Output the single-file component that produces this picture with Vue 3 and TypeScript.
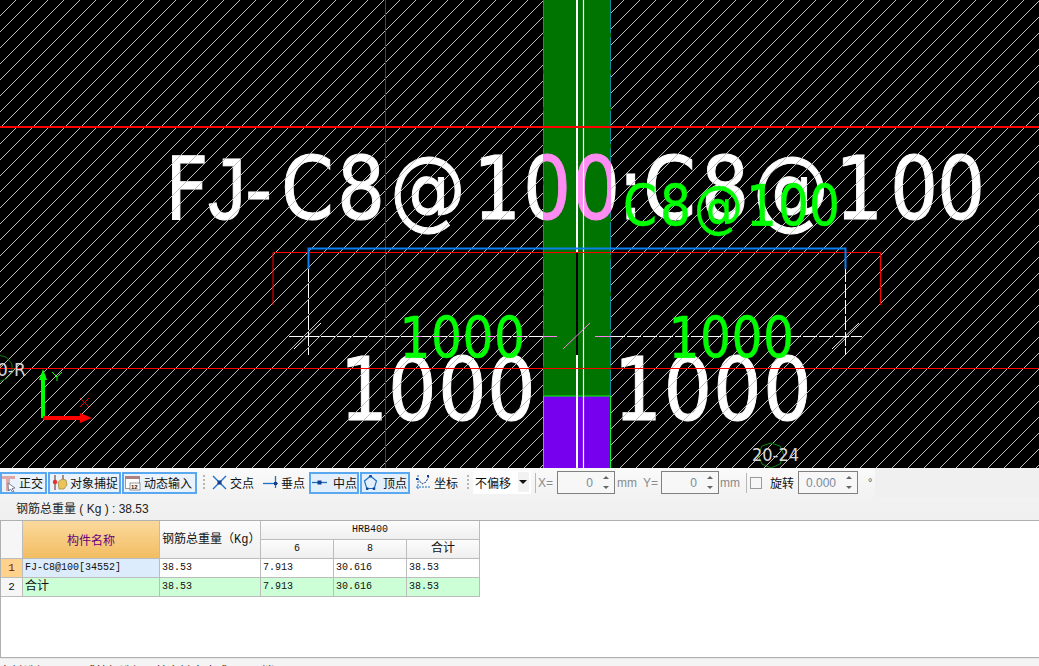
<script setup lang="ts">
interface Row { no: string; name: string; total: string; a: string; b: string; sum: string; cls: string; cjk: boolean }
const rows: Row[] = [
  { no: '1', name: 'FJ-C8@100[34552]', total: '38.53', a: '7.913', b: '30.616', sum: '38.53', cls: 'first', cjk: false },
  { no: '2', name: '合计', total: '38.53', a: '7.913', b: '30.616', sum: '38.53', cls: 'totalrow', cjk: true },
]
// The drawing's font is narrower than DejaVu Sans, so glyphs are squeezed and placed one by one.
const SX = 0.87
const xs = (list: number[]): string => list.map((v) => (v / SX).toFixed(1)).join(' ')
const squeeze = `scale(${SX} 1)`
const titleX = xs([165, 208, 245, 281, 337, 390, 473, 523, 572, 618, 643, 701, 753, 835, 890, 937])
const bigL = xs([339.5, 388, 438, 487])
const bigR = xs([613.5, 663.5, 713, 763])
const midL = xs([399.5, 431, 462.5, 494])
const midR = xs([668.5, 700, 731.5, 763])
const midT = xs([623, 660, 694, 746, 778, 809])
</script>

<template>
  <div class="root">
    <svg class="cad" width="1039" height="468" viewBox="0 0 1039 468">
      <defs>
        <pattern id="hatch" width="16" height="16" patternUnits="userSpaceOnUse">
          <line x1="-1" y1="17" x2="17" y2="-1" class="hl" />
        </pattern>
        <clipPath id="col"><rect x="543" y="0" width="68" height="468" /></clipPath>
      </defs>
      <rect width="1039" height="468" fill="#000" />

      <g class="big" :transform="squeeze">
        <text :x="titleX" y="219" font-size="87">F<tspan class="jay">J</tspan>-C8@100:C8@100</text>
        <text :x="bigL" y="420" font-size="88">1000</text>
        <text :x="bigR" y="420" font-size="88">1000</text>
      </g>

      <rect width="1039" height="468" fill="url(#hatch)" />

      <rect x="543" y="0" width="68" height="396" fill="#007400" />
      <rect x="543" y="396" width="68" height="72" fill="#7700ee" />
      <line x1="543" y1="396" x2="611" y2="396" stroke="#00ff00" stroke-width="1" />
      <line x1="543.5" y1="396" x2="543.5" y2="468" stroke="#00ff00" />
      <line x1="610.5" y1="396" x2="610.5" y2="468" stroke="#00ff00" />
      <line x1="543.5" y1="0" x2="543.5" y2="396" class="teal" />
      <line x1="610.5" y1="0" x2="610.5" y2="396" class="teal" />

      <g clip-path="url(#col)">
        <g class="big pink" :transform="squeeze">
          <text :x="titleX" y="219" font-size="87">F<tspan class="jay">J</tspan>-C8@100:C8@100</text>
        </g>
      </g>

      <line x1="577" y1="0" x2="577" y2="253" class="w2" />
      <line x1="577" y1="253" x2="577" y2="355" stroke="#000" stroke-width="2" />
      <line x1="577" y1="355" x2="577" y2="468" class="w2" />
      <line x1="583.5" y1="0" x2="583.5" y2="468" stroke="#fff" stroke-width="1.2" />

      <line x1="385.5" y1="0" x2="385.5" y2="468" stroke="#8f2a10" />

      <rect x="0" y="126" width="1039" height="2" fill="#ff0000" />
      <rect x="0" y="368" width="1039" height="1" fill="#ff0000" />
      <polyline points="273,305 273,252.5 880.5,252.5 880.5,305" class="red" fill="none" />

      <line x1="308.5" y1="268" x2="308.5" y2="355" class="wd" />
      <line x1="845.5" y1="268" x2="845.5" y2="355" class="wd" />
      <polyline points="308.5,269 308.5,248.5 845.5,248.5 845.5,269" fill="none" stroke="#0a7ff0" stroke-width="2" />

      <line x1="289" y1="336.5" x2="543" y2="336.5" class="wh" />
      <line x1="611" y1="336.5" x2="862" y2="336.5" class="wh" />
      <line x1="543" y1="336.5" x2="557" y2="336.5" class="pk" />
      <line x1="595" y1="336.5" x2="611" y2="336.5" class="pk" />
      <line x1="294" y1="349" x2="321" y2="323" stroke="#fff" />
      <line x1="832" y1="349" x2="859" y2="323" stroke="#fff" />
      <line x1="563" y1="349" x2="590" y2="323" class="pk" />

      <g class="grn" :transform="squeeze">
        <text :x="midL" y="358" font-size="56">1000</text>
        <text :x="midR" y="358" font-size="56">1000</text>
        <text :x="midT" y="226" font-size="56">C8@100</text>
      </g>
      <g class="pk">
        <line x1="416" y1="336.5" x2="422" y2="336.5" />
        <line x1="434" y1="336.5" x2="441" y2="336.5" />
        <line x1="455" y1="336.5" x2="462" y2="336.5" />
        <line x1="488" y1="336.5" x2="496" y2="336.5" />
        <line x1="518" y1="336.5" x2="524" y2="336.5" />
      </g>

      <!-- UCS axis -->
      <line x1="43" y1="418" x2="43" y2="378" stroke="#00ff00" stroke-width="4" />
      <polygon points="43,369 47,380 39,380" fill="#00ff00" />
      <line x1="43" y1="418" x2="82" y2="418" stroke="#ff0000" stroke-width="4" />
      <polygon points="92,418 80,413 80,423" fill="#ff0000" />
      <polyline points="52,372 57,377 62,372" fill="none" stroke="#00ff00" />
      <line x1="57" y1="377" x2="57" y2="381" stroke="#00ff00" />
      <line x1="80" y1="398" x2="89" y2="407" stroke="#e00000" />
      <line x1="89" y1="398" x2="80" y2="407" stroke="#e00000" />

      <!-- grid bubbles -->
      <polygon points="-2,355 6,357 12,364 12,373 6,379 -2,382" fill="none" stroke="#0a7a0a" />
      <text x="-3" y="376" class="lab" font-size="17">0-R</text>
      <polygon points="771,443 780,446 784,455 780,464 771,468 762,464 758,455 762,446" fill="none" stroke="#0a8a0a" />
      <text x="752" y="461" class="lab" font-size="17" textLength="47" lengthAdjust="spacingAndGlyphs">20-24</text>
    </svg>

    <div class="toolbar">
      <div class="bar">
        <button class="tb act w47 gap0">
          <svg width="17" height="18" viewBox="0 0 17 18"><path d="M0 2h13v3H8v12H4V5H0z" fill="#e0a8a4" /><path d="M6 9l7 5-3 .5 2 3-1.500 .5-2-3-2 2z" fill="#fff" stroke="#667" stroke-width=".8" /></svg>
          <span>正交</span>
        </button>
        <button class="tb act w74">
          <svg width="18" height="17" viewBox="0 0 18 17"><path d="M5 1v15M13 1v8" stroke="#7a4a3a" stroke-width="1.200" /><circle cx="5" cy="8" r="2.200" fill="#d33" /><path d="M8 8l4-3 4 1 1 5-3 4H9z" fill="#e8c45a" stroke="#a08030" stroke-width=".7" /></svg>
          <span>对象捕捉</span>
        </button>
        <button class="tb act w75 gap3">
          <svg width="17" height="17" viewBox="0 0 17 17"><rect x="1.500" y="2.500" width="14" height="12" fill="#fff" stroke="#999" /><rect x="1" y="2" width="15" height="3" fill="#b08080" /><rect x="6" y="9" width="10" height="7" fill="#fff" stroke="#555" stroke-width=".6" /><text x="7" y="15" class="mini">12</text></svg>
          <span>动态输入</span>
        </button>

        <i class="grip g1"></i>

        <button class="tb w46 ml4">
          <svg width="17" height="17" viewBox="0 0 17 17"><path d="M2 2l13 13M15 2L2 15" stroke="#1f6fc4" stroke-width="1.400" /><rect x="6.500" y="6.500" width="4" height="4" fill="#123f8f" /></svg>
          <span>交点</span>
        </button>
        <button class="tb w47 ml5">
          <svg width="17" height="17" viewBox="0 0 17 17"><path d="M1 9.500h15" stroke="#1f6fc4" stroke-width="1.300" /><path d="M13.500 2v12" stroke="#1f6fc4" stroke-width="1.300" /><rect x="12" y="8" width="3" height="3" fill="#123f8f" /></svg>
          <span>垂点</span>
        </button>
        <button class="tb act sel w50 ml2 gap5">
          <svg width="17" height="17" viewBox="0 0 17 17"><path d="M1 8.500h15" stroke="#1f6fc4" stroke-width="1.300" /><rect x="6.500" y="6.500" width="4" height="4" fill="#123f8f" /></svg>
          <span>中点</span>
        </button>
        <button class="tb act sel w50 ml1 gap4">
          <svg width="17" height="17" viewBox="0 0 17 17"><path d="M8.500 2l6 5-2.300 7.500H4.800L2.500 7z" fill="none" stroke="#1f6fc4" stroke-width="1.200" /><rect x="7.300" y="1" width="2.400" height="2.400" fill="#123f8f" /><rect x="4" y="13.500" width="2.400" height="2.400" fill="#123f8f" /><rect x="10.800" y="13.500" width="2.400" height="2.400" fill="#123f8f" /></svg>
          <span>顶点</span>
        </button>
        <button class="tb w46 ml3">
          <svg width="17" height="17" viewBox="0 0 17 17"><path d="M3 1v15M1 13h15" stroke="#1f6fc4" stroke-dasharray="2 1" /><path d="M3 5l4 5 4-2 3-6" fill="none" stroke="#123f8f" stroke-dasharray="2 1" /><rect x="12" y="1" width="2" height="2" fill="#123f8f" /><rect x="1" y="4" width="2" height="2" fill="#123f8f" /></svg>
          <span>坐标</span>
        </button>

        <i class="grip g2"></i>

        <div class="combo">
          <span class="combo-t">不偏移</span>
          <span class="combo-a"></span>
        </div>
        <i class="sep s1"></i>
        <span class="lbl x">X=</span>
        <div class="spin w58"><span class="val">0</span><span class="arr"><b class="up"></b><b class="dn"></b></span></div>
        <span class="lbl mm">mm</span>
        <span class="lbl y">Y=</span>
        <div class="spin w58"><span class="val">0</span><span class="arr"><b class="up"></b><b class="dn"></b></span></div>
        <span class="lbl mm2">mm</span>
        <i class="sep s2"></i>
        <i class="check"></i>
        <span class="rot">旋转</span>
        <div class="spin w60"><span class="val">0.000</span><span class="arr"><b class="up"></b><b class="dn"></b></span></div>
        <span class="lbl deg">°</span>
      </div>
    </div>

    <div class="summary">钢筋总重量 ( Kg ) : 38.53</div>

    <div class="panel">
      <table class="grid">
        <colgroup>
          <col class="c0" /><col class="c1" /><col class="c2" /><col class="c3" /><col class="c3" /><col class="c3" />
        </colgroup>
        <thead>
          <tr>
            <th rowspan="2" class="corner"></th>
            <th rowspan="2" class="name-h">构件名称</th>
            <th rowspan="2" class="left">钢筋总重量（Kg）</th>
            <th colspan="3">HRB400</th>
          </tr>
          <tr><th>6</th><th>8</th><th class="cjk">合计</th></tr>
        </thead>
        <tbody>
          <tr v-for="r in rows" :key="r.no" :class="r.cls">
            <td class="no">{{ r.no }}</td>
            <td class="nm" :class="{ cjk: r.cjk }">{{ r.name }}</td>
            <td>{{ r.total }}</td>
            <td>{{ r.a }}</td>
            <td>{{ r.b }}</td>
            <td>{{ r.sum }}</td>
          </tr>
        </tbody>
      </table>
    </div>

    <div class="status">左键选择图元，或拉框选择，按右键中止或ESC取消</div>
  </div>
</template>

<style>
html, body { margin: 0; padding: 0; background: #f0f0f0; }
</style>

<style scoped>
.root { width: 1039px; height: 666px; overflow: hidden; display: flex; flex-direction: column; background: #f0f0f0; font-family: "Liberation Sans", "Noto Sans CJK SC", sans-serif; }
.cad { display: block; flex: none; }
.hl { stroke: #c0c0c0; stroke-width: 1; shape-rendering: crispEdges; }
.big text { font-family: "DejaVu Sans", sans-serif; fill: #fff; stroke: #fff; stroke-width: 1; }
.pink text { fill: #ff8cf2; stroke: #ff8cf2; }
.jay { font-family: "Liberation Sans", sans-serif; }
.grn text { font-family: "DejaVu Sans", sans-serif; fill: #00ff00; stroke: #00ff00; stroke-width: .4; }
.lab { font-family: "DejaVu Sans", sans-serif; fill: #d8d8d8; }
.mini { font-family: "Liberation Sans", sans-serif; font-size: 6px; fill: #222; font-weight: bold; }
.teal { stroke: #0a8f9a; stroke-width: 1; stroke-dasharray: 33 4; }
.red { stroke: #ff0000; stroke-width: 1; }
.w2 { stroke: #fff; stroke-width: 2; }
.wd { stroke: #fff; stroke-width: 1; stroke-dasharray: 14 2; }
.wh { stroke: #fff; stroke-width: 1; stroke-dasharray: 14 2; }
.pk { stroke: #ff80f0; stroke-width: 1; }

.toolbar { height: 29px; flex: none; background: #f0f0f0; }
.bar { width: 875px; height: 29px; display: flex; align-items: center; background: linear-gradient(#fafafa, #f2f2f2); box-sizing: border-box; }
.tb { height: 22px; box-sizing: border-box; border: 1px solid transparent; background: none; padding: 0 0 0 1px; margin: 0; display: flex; align-items: center; gap: 2px; font: 12px "Noto Sans CJK SC", sans-serif; color: #111; flex: none; }
.tb svg { flex: none; }
.tb span { line-height: 1; white-space: nowrap; }
.act { border: 2px solid #5aa9f0; padding-left: 0; background: #eaf3fb; }
.sel { background: #e3effa; }
.w47 { width: 47px; margin-right: 1px; }
.w74 { width: 73px; margin-right: 1px; }
.w75 { width: 75px; }
.w46 { width: 46px; }
.w50 { width: 50px; }
.gap0 { gap: 0; }
.gap3 { gap: 3px; }
.gap4 { gap: 4px; }
.gap5 { gap: 5px; }
.ml4 { margin-left: 4px; }
.ml5 { margin-left: 5px; }
.ml2 { margin-left: 1px; }
.ml1 { margin-left: 1px; }
.ml3 { margin-left: 3px; }
.grip { flex: none; width: 2px; height: 16px; background: repeating-linear-gradient(#b5b5b5 0 2px, transparent 2px 4px); }
.g1 { margin-left: 6px; }
.g2 { margin-left: 8px; }
.combo { flex: none; width: 58px; height: 23px; margin-left: 4px; background: #fff; display: flex; align-items: center; box-sizing: border-box; padding-left: 2px; position: relative; }
.combo-t { font: 12px "Noto Sans CJK SC", sans-serif; color: #111; }
.combo-a { position: absolute; right: 2px; top: 1px; width: 11px; height: 20px; background: #f2f2f2; }
.combo-a::after { content: ""; position: absolute; left: 1px; top: 8px; border: 4px solid transparent; border-top-color: #111; border-bottom: 0; }
.sep { flex: none; width: 1px; height: 20px; background: #b8b8b8; }
.s1 { margin-left: 4px; }
.s2 { margin-left: 4px; }
.lbl { flex: none; font-size: 12px; color: #8a8a8a; line-height: 1; }
.x { margin-left: 2px; width: 19px; }
.mm { margin-left: 2px; width: 26px; font-size: 12px; }
.y { width: 18px; }
.mm2 { margin-left: 1px; width: 22px; }
.spin { flex: none; height: 23px; box-sizing: border-box; border: 1px solid #808080; background: #f7f7f7; display: flex; align-items: center; justify-content: flex-end; }
.w58 { width: 58px; }
.w60 { width: 60px; }
.val { font-size: 12px; color: #7a8a9a; margin-right: 8px; }
.arr { width: 10px; margin-right: 3px; height: 100%; display: flex; flex-direction: column; align-items: center; justify-content: space-between; padding: 4px 0; box-sizing: border-box; }
.up, .dn { width: 0; height: 0; border-left: 3px solid transparent; border-right: 3px solid transparent; }
.up { border-bottom: 3px solid #666; }
.dn { border-top: 3px solid #666; }
.check { flex: none; width: 10px; height: 10px; border: 1px solid #9a9a9a; background: #f7f7f7; margin-left: 3px; }
.rot { flex: none; margin-left: 8px; margin-right: 4px; width: 24px; font: 12px "Noto Sans CJK SC", sans-serif; color: #111; }
.deg { margin-left: 10px; font-size: 11px; color: #555; }

.summary { height: 23px; flex: none; box-sizing: border-box; padding: 3px 0 0 16px; font-size: 12px; line-height: 18px; color: #222; background: linear-gradient(#f2f2f2, #efefef); white-space: nowrap; }

.panel { height: 138px; flex: none; box-sizing: border-box; border-top: 1px solid #b0b0b0; border-left: 1px solid #b0b0b0; border-bottom: 1px solid #b0b0b0; background: #fff; }
.grid { border-collapse: separate; border-spacing: 0; table-layout: fixed; width: 478px; font: 10px/18px "Liberation Mono", "Noto Sans CJK SC", monospace; color: #111; }
.c0 { width: 22px; }
.c1 { width: 137px; }
.c2 { width: 101px; }
.c3 { width: 73px; }
.grid th, .grid td { height: 19px; padding: 0; box-sizing: border-box; border-right: 1px solid #bcbcbc; border-bottom: 1px solid #bcbcbc; white-space: nowrap; overflow: hidden; }
.grid th { font-weight: normal; text-align: center; background: linear-gradient(#fcfcfc, #efefef); }
.grid td { padding-left: 2px; text-align: left; }
.grid th.corner { background: #f6f6f6; }
.grid th.name-h { background: linear-gradient(#fbd99c, #f2bd62); color: #6a0080; font-family: "Noto Sans CJK SC", sans-serif; font-size: 12px; }
.grid th.left { text-align: left; padding-left: 2px; font-size: 12px; }
.grid .cjk { font-size: 12px; }
.grid td.no { text-align: center; padding: 0; font-size: 11px; background: #f6f6f6; }
.first td.no { background: #ffd28c; color: #7a1010; }
.first td.nm { background: #ddecfc; }
.totalrow td { background: #ccffd6; }

.status { flex: 1; border-top: 1px solid #e8e8e8; font: 12px/14px "Noto Sans CJK SC", sans-serif; color: #111; padding-top: 5px; white-space: nowrap; overflow: hidden; background: #f4f4f4; }
</style>
